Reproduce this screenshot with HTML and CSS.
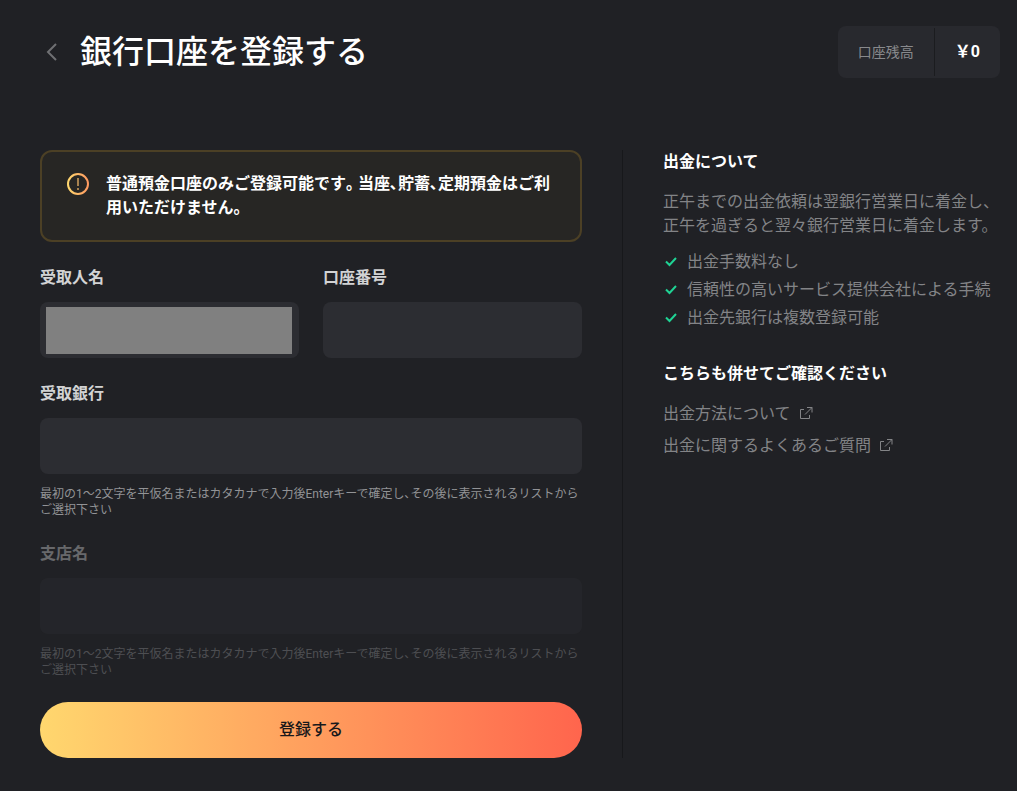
FILE: index.html
```html
<!DOCTYPE html>
<html lang="ja">
<head>
<meta charset="utf-8">
<meta name="viewport" content="width=device-width, initial-scale=1">
<title>銀行口座を登録する</title>
<link rel="stylesheet" href="styles.css">
</head>
<body>
<div class="page">
  <header class="header">
    <button class="back" type="button" aria-label="戻る">
      <svg width="24" height="24" viewBox="0 0 24 24" fill="none" stroke="currentColor" stroke-width="2"><path d="M16 4 8 12l8 8"/></svg>
    </button>
    <h1 class="title">銀行口座を登録する</h1>
    <div class="balance">
      <span class="balance-label">口座残高</span>
      <strong class="balance-value">￥0</strong>
    </div>
  </header>
  <main class="columns">
    <form class="form">
      <div class="notice">
        <svg class="notice-icon" width="24" height="24" viewBox="0 0 24 24" fill="none">
          <defs><linearGradient id="ring" x1="0" x2="1" y1="0" y2="0"><stop offset="0" stop-color="#ffd76e"/><stop offset="1" stop-color="#ff9a60"/></linearGradient></defs>
          <circle cx="12" cy="12" r="10" stroke="url(#ring)" stroke-width="2"/>
          <path d="M12 6v8M12 16v2" stroke="#c99a5b" stroke-width="1.6"/>
        </svg>
        <p class="notice-text">普通預金口座のみご登録可能です｡ 当座､貯蓄､定期預金はご利用いただけません｡</p>
      </div>
      <div class="row">
        <div class="field">
          <label class="label" for="holder">受取人名</label>
          <div class="masked"><input class="mask" id="holder" type="text"></div>
        </div>
        <div class="field">
          <label class="label" for="number">口座番号</label>
          <input class="input" id="number" type="text">
        </div>
      </div>
      <div class="field">
        <label class="label" for="bank">受取銀行</label>
        <input class="input" id="bank" type="text" aria-describedby="bank-hint">
        <p class="hint" id="bank-hint">最初の1〜2文字を平仮名またはカタカナで入力後Enterキーで確定し､その後に表示されるリストからご選択下さい</p>
      </div>
      <div class="field field-disabled">
        <label class="label" for="branch">支店名</label>
        <input class="input" id="branch" type="text" aria-describedby="branch-hint" disabled>
        <p class="hint" id="branch-hint">最初の1〜2文字を平仮名またはカタカナで入力後Enterキーで確定し､その後に表示されるリストからご選択下さい</p>
      </div>
      <button class="submit" type="submit">登録する</button>
    </form>
    <aside class="aside">
      <section class="info">
        <h2 class="heading">出金について</h2>
        <p class="paragraph">正午までの出金依頼は翌銀行営業日に着金し、正午を過ぎると翌々銀行営業日に着金します。</p>
        <ul class="checks">
          <li class="check"><svg class="tick" width="16" height="16" viewBox="0 0 16 16"><path d="M3 7.500 6.500 11 13 4"/></svg>出金手数料なし</li>
          <li class="check"><svg class="tick" width="16" height="16" viewBox="0 0 16 16"><path d="M3 7.500 6.500 11 13 4"/></svg>信頼性の高いサービス提供会社による手続</li>
          <li class="check"><svg class="tick" width="16" height="16" viewBox="0 0 16 16"><path d="M3 7.500 6.500 11 13 4"/></svg>出金先銀行は複数登録可能</li>
        </ul>
      </section>
      <section class="info">
        <h2 class="heading">こちらも併せてご確認ください</h2>
        <div class="links">
          <a class="link" href="#method">出金方法について<svg class="external" width="16" height="16" viewBox="0 0 16 16"><path d="M5 3.500H1.500V12.500H10.500V9M8 1.500h5V6.500M13 1.500 6 8.500"/></svg></a>
          <a class="link" href="#faq">出金に関するよくあるご質問<svg class="external" width="16" height="16" viewBox="0 0 16 16"><path d="M5 3.500H1.500V12.500H10.500V9M8 1.500h5V6.500M13 1.500 6 8.500"/></svg></a>
        </div>
      </section>
    </aside>
  </main>
</div>
</body>
</html>
```
FILE: styles.css
```css
* { box-sizing: border-box; }
body {
  margin: 0;
  background: #202125;
  color: #fff;
  font-family: Roboto, "Noto Sans CJK JP", sans-serif;
  font-size: 16px;
  line-height: 24px;
}
h1, h2, p, ul { margin: 0; padding: 0; }
button, input { font: inherit; border: 0; }
.page { padding: 26px 17px 32px 40px; }
.header { display: flex; align-items: center; gap: 16px; }
.back {
  display: flex;
  padding: 0;
  background: none;
  color: #6f7073;
  cursor: pointer;
}
.title { flex: 1; font-size: 32px; line-height: 48px; font-weight: 500; }
.balance {
  display: flex;
  align-items: stretch;
  padding: 2px 0;
  border-radius: 8px;
  background: #28292e;
}
.balance-label {
  padding: 12px 20px;
  border-right: 1px solid #1b1c1f;
  font-size: 14px;
  color: #88898c;
}
.balance-value { padding: 12px 20px; font-weight: 700; }
.columns {
  display: grid;
  grid-template-columns: minmax(0, 582fr) minmax(0, 378fr);
  margin-top: 72px;
}
.form { display: flex; flex-direction: column; gap: 24px; padding-right: 40px; }
.notice {
  display: flex;
  gap: 16px;
  padding: 20px 24px;
  border: 2px solid #4c4025;
  border-radius: 12px;
  background: #272624;
}
.notice-icon { flex: none; }
.notice-text { flex: 1; font-weight: 700; }
.row { display: grid; grid-template-columns: 1fr 1fr; gap: 24px; }
.field { display: flex; flex-direction: column; gap: 12px; min-width: 0; }
.field-disabled { opacity: 0.4; }
.label { font-weight: 700; color: #d2d3d4; }
.input, .masked { width: 100%; height: 56px; border-radius: 8px; background: #2c2d32; }
.input { padding: 16px; color: #fff; }
.masked { padding: 5px 7px 4px 6px; }
.mask { display: block; width: 100%; height: 100%; background: #808080; }
.hint { font-size: 12px; line-height: 16px; color: #929396; }
.submit {
  height: 56px;
  border-radius: 28px;
  background: linear-gradient(90deg, #ffd76e, #ff654d);
  color: #17181b;
  font-weight: 500;
  cursor: pointer;
}
.aside {
  display: flex;
  flex-direction: column;
  gap: 32px;
  padding-left: 40px;
  border-left: 1px solid #17181b;
}
.heading { margin-bottom: 16px; font-size: 16px; font-weight: 700; }
.paragraph { margin-bottom: 12px; color: #838487; }
.checks { display: flex; flex-direction: column; gap: 4px; list-style: none; }
.check { display: flex; align-items: center; gap: 8px; color: #838487; }
.tick { flex: none; fill: none; stroke: #1fd394; stroke-width: 2; }
.links { display: flex; flex-direction: column; align-items: flex-start; gap: 8px; }
.link { display: flex; align-items: center; gap: 8px; color: #838487; text-decoration: none; }
.external { flex: none; fill: none; stroke: currentColor; stroke-width: 1; }
```
